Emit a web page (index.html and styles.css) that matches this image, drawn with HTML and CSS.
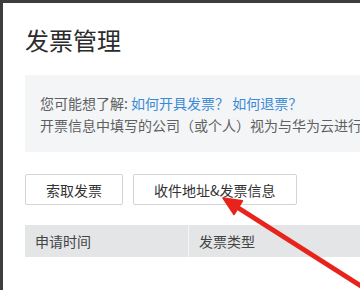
FILE: index.html
```html
<!DOCTYPE html>
<html lang="zh">
<head>
<meta charset="utf-8">
<title>发票管理</title>
<link rel="stylesheet" href="styles.css">
</head>
<body>
<div class="dialog">
  <h1 class="title">发票管理</h1>
  <div class="info">
    <p class="line">您可能想了解: <a class="link">如何开具发票？</a> <a class="link">如何退票？</a></p>
    <p class="line">开票信息中填写的公司（或个人）视为与华为云进行</p>
  </div>
  <div class="actions">
    <button class="btn">索取发票</button>
    <button class="btn">收件地址&amp;发票信息</button>
  </div>
  <div class="thead">
    <div class="th th-first">申请时间</div>
    <div class="th">发票类型</div>
  </div>
</div>
<svg class="arrow" width="360" height="290" viewBox="0 0 360 290">
  <line x1="236" y1="206.5" x2="372" y2="293" stroke="#e8231b" stroke-width="5" stroke-linecap="round"/>
  <polygon points="223,198 234,214.5 242.5,200.8" fill="#e8231b" stroke="#e8231b" stroke-width="1.5" stroke-linejoin="round"/>
</svg>
</body>
</html>
```
FILE: styles.css
```css
html, body {
  margin: 0;
  padding: 0;
  height: 100%;
  overflow: hidden;
}
body {
  background: #3d3d3d;
  font-family: "Noto Sans CJK SC", "Noto Sans", sans-serif;
  color: #333;
  position: relative;
}
.dialog {
  margin: 3px 0 0 3px;
  background: #fff;
  height: 287px;
  padding: 21px 0 0 22px;
  box-sizing: border-box;
}
.title {
  margin: 0;
  font-size: 24px;
  line-height: 32px;
  font-weight: normal;
  color: #2b2b2b;
}
.info {
  margin-top: 19px;
  background: #f3f5f7;
  padding: 17px 0 16px 15px;
  white-space: nowrap;
  overflow: hidden;
}
.line {
  margin: 0;
  font-size: 14px;
  line-height: 22px;
  color: #5f5f5f;
}
.link {
  color: #3a8ad6;
}
.actions {
  margin-top: 22px;
  display: flex;
  gap: 10px;
}
.btn {
  height: 31px;
  padding: 0 20px;
  border: 1px solid #d4d4d4;
  border-radius: 2px;
  background: #fff;
  font-family: "Noto Sans CJK SC", "Noto Sans", sans-serif;
  font-size: 14px;
  color: #333;
}
.thead {
  margin-top: 20px;
  display: flex;
  background: #e3e5e7;
  height: 32px;
}
.th {
  padding-left: 10px;
  font-size: 14px;
  line-height: 32px;
  color: #444;
}
.th-first {
  width: 153px;
  border-right: 1px solid #f4f5f6;
}
.arrow {
  position: absolute;
  left: 0;
  top: 0;
  pointer-events: none;
}
```
